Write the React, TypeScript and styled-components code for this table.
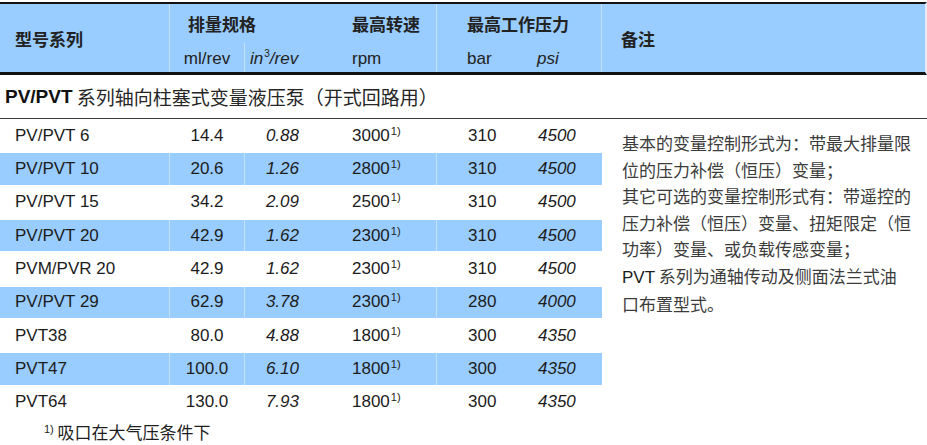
import React, { FC } from "react"
import styled, { createGlobalStyle } from "styled-components"

interface PumpRow {
  model: string
  ml: string
  inch: string
  rpm: string
  bar: string
  psi: string
}

const rows: PumpRow[] = [
  { model: "PV/PVT 6", ml: "14.4", inch: "0.88", rpm: "3000", bar: "310", psi: "4500" },
  { model: "PV/PVT 10", ml: "20.6", inch: "1.26", rpm: "2800", bar: "310", psi: "4500" },
  { model: "PV/PVT 15", ml: "34.2", inch: "2.09", rpm: "2500", bar: "310", psi: "4500" },
  { model: "PV/PVT 20", ml: "42.9", inch: "1.62", rpm: "2300", bar: "310", psi: "4500" },
  { model: "PVM/PVR 20", ml: "42.9", inch: "1.62", rpm: "2300", bar: "310", psi: "4500" },
  { model: "PV/PVT 29", ml: "62.9", inch: "3.78", rpm: "2300", bar: "280", psi: "4000" },
  { model: "PVT38", ml: "80.0", inch: "4.88", rpm: "1800", bar: "300", psi: "4350" },
  { model: "PVT47", ml: "100.0", inch: "6.10", rpm: "1800", bar: "300", psi: "4350" },
  { model: "PVT64", ml: "130.0", inch: "7.93", rpm: "1800", bar: "300", psi: "4350" },
]

// each remark paragraph keeps the line breaks of the printed sheet
const remarks: string[][] = [
  ["基本的变量控制形式为：带最大排量限", "位的压力补偿（恒压）变量；"],
  ["其它可选的变量控制形式有：带遥控的", "压力补偿（恒压）变量、扭矩限定（恒", "功率）变量、或负载传感变量；"],
  ["PVT 系列为通轴传动及侧面法兰式油", "口布置型式。"],
]

const COLUMNS = "170px 75px 65px 127px 83px 82px"
const BLUE = "#99ccff"
const DIVIDER = "rgba(255, 255, 255, 0.4)"

const App: FC = () => (
  <Page>
    <GlobalStyle />
    <Header>
      <HeadCell $col="1" $row="1 / 3" $pad={15} $bold $divider>型号系列</HeadCell>
      <HeadCell $col="2 / 4" $row="1" $pad={18} $bold>排量规格</HeadCell>
      <HeadCell $col="4" $row="1" $pad={42} $bold $divider>最高转速</HeadCell>
      <HeadCell $col="5 / 7" $row="1" $pad={30} $bold $divider>最高工作压力</HeadCell>
      <HeadCell $col="7" $row="1 / 3" $pad={19} $bold>备注</HeadCell>
      <HeadCell $col="2" $row="2" $center $divider $low>ml/rev</HeadCell>
      <HeadCell $col="3" $row="2" $pad={5} $italic $low>
        <span>in<Sup $small>3</Sup>/rev</span>
      </HeadCell>
      <HeadCell $col="4" $row="2" $pad={42} $divider $low>rpm</HeadCell>
      <HeadCell $col="5" $row="2" $pad={30} $low>bar</HeadCell>
      <HeadCell $col="6" $row="2" $pad={17} $italic $divider $low>psi</HeadCell>
    </Header>

    <SectionTitle>
      <Latin>PV/PVT</Latin> 系列轴向柱塞式变量液压泵（开式回路用）
    </SectionTitle>

    <Body>
      <Table>
        {rows.map((r, i) => (
          <DataRow key={r.model} $shaded={i % 2 === 1}>
            <Cell $align="left" $pad={15} $divider>{r.model}</Cell>
            <Cell $align="center" $divider>{r.ml}</Cell>
            <Cell $align="right" $pad={10} $italic>{r.inch}</Cell>
            <Cell $align="left" $pad={42} $divider>
              <span>{r.rpm}<Sup>1)</Sup></span>
            </Cell>
            <Cell $align="left" $pad={31}>{r.bar}</Cell>
            <Cell $align="left" $pad={18} $italic>{r.psi}</Cell>
          </DataRow>
        ))}
      </Table>
      <Remarks>
        {remarks.map((para, i) => (
          <Paragraph key={i}>
            {para.map(line => {
              if (line.startsWith("PVT")) {
                return <Line key={line}><RemarkLatin>PVT</RemarkLatin>{line.slice(3)}</Line>
              }
              return <Line key={line}>{line}</Line>
            })}
          </Paragraph>
        ))}
      </Remarks>
    </Body>

    <Footnote>
      <span><Sup>1)</Sup> 吸口在大气压条件下</span>
    </Footnote>
  </Page>
)

const GlobalStyle = createGlobalStyle`
  body {
    margin: 0;
    background: #ffffff;
  }
`

const Page = styled.div`
  width: 927px;
  padding-top: 2px;
  font-family: "Liberation Sans", "Noto Sans CJK SC", sans-serif;
  color: #1c1c1c;
  box-sizing: border-box;
`

const Header = styled.div`
  display: grid;
  grid-template-columns: ${COLUMNS} 1fr;
  grid-template-rows: 39px 29px;
  background: ${BLUE};
  border-top: 2px solid #121212;
  border-bottom: 3px solid #121212;
  border-right: 2px solid #e4eef8;
  font-size: 17px;
  color: #222;
`

const HeadCell = styled.div<{
  $col: string
  $row: string
  $pad?: number
  $center?: boolean
  $bold?: boolean
  $italic?: boolean
  $divider?: boolean
  $low?: boolean
}>`
  grid-column: ${p => p.$col};
  grid-row: ${p => p.$row};
  display: flex;
  align-items: center;
  justify-content: ${p => (p.$center ? "center" : "flex-start")};
  padding-left: ${p => p.$pad ?? 0}px;
  padding-top: ${p => (p.$low ? 3 : 0)}px;
  box-sizing: border-box;
  font-family: ${p => (p.$bold ? `"Noto Sans CJK SC", sans-serif` : `"Liberation Sans", sans-serif`)};
  font-weight: ${p => (p.$bold ? 700 : 400)};
  font-style: ${p => (p.$italic ? "italic" : "normal")};
  white-space: nowrap;
  border-right: 1px solid ${p => (p.$divider ? DIVIDER : "transparent")};
`

const Sup = styled.sup<{ $small?: boolean }>`
  font-family: "Liberation Sans", sans-serif;
  font-size: ${p => (p.$small ? 10 : 11)}px;
  vertical-align: ${p => (p.$small ? 7 : 6)}px;
  line-height: 0;
  margin-left: 1px;
  font-style: normal;
`

const SectionTitle = styled.div`
  height: 43px;
  display: flex;
  align-items: center;
  padding-left: 5px;
  border-bottom: 1px solid #3a3a3a;
  font-family: "Noto Sans CJK SC", sans-serif;
  font-size: 19px;
  color: #262626;
  white-space: pre;
`

const Latin = styled.span`
  font-family: "Liberation Sans", sans-serif;
  font-weight: 700;
  font-size: 19px;
  color: #111;
`

const Body = styled.div`
  display: flex;
`

const Table = styled.div`
  width: 602px;
  flex: none;
`

const DataRow = styled.div<{ $shaded: boolean }>`
  display: grid;
  grid-template-columns: ${COLUMNS};
  height: 33.33px;
  box-sizing: border-box;
  border-top: 1px solid #fff;
  border-bottom: 1px solid #fff;
  background: ${p => (p.$shaded ? BLUE : "transparent")};
  background-clip: padding-box;
  font-size: 17px;
`

const Cell = styled.div<{ $align: "left" | "center" | "right"; $pad?: number; $italic?: boolean; $divider?: boolean }>`
  display: flex;
  align-items: center;
  justify-content: ${p => (p.$align === "left" ? "flex-start" : p.$align === "center" ? "center" : "flex-end")};
  padding-left: ${p => (p.$align === "left" ? p.$pad ?? 0 : 0)}px;
  padding-right: ${p => (p.$align === "right" ? p.$pad ?? 0 : 0)}px;
  font-style: ${p => (p.$italic ? "italic" : "normal")};
  white-space: nowrap;
  border-right: 1px solid ${p => (p.$divider ? DIVIDER : "transparent")};
`

const Remarks = styled.div`
  flex: 1;
  padding: 11px 0 0 20px;
  font-family: "Noto Sans CJK SC", sans-serif;
  font-size: 17px;
  line-height: 26.5px;
  color: #3c3c3c;
`

const Paragraph = styled.div``

const Line = styled.div`
  white-space: nowrap;
`

const RemarkLatin = styled.span`
  font-family: "Liberation Sans", sans-serif;
  color: #1c1c1c;
`

const Footnote = styled.div`
  height: 26px;
  display: flex;
  align-items: center;
  padding-left: 43px;
  font-family: "Noto Sans CJK SC", sans-serif;
  font-size: 17px;
  color: #1e1e1e;
  white-space: pre;
`

export default App
